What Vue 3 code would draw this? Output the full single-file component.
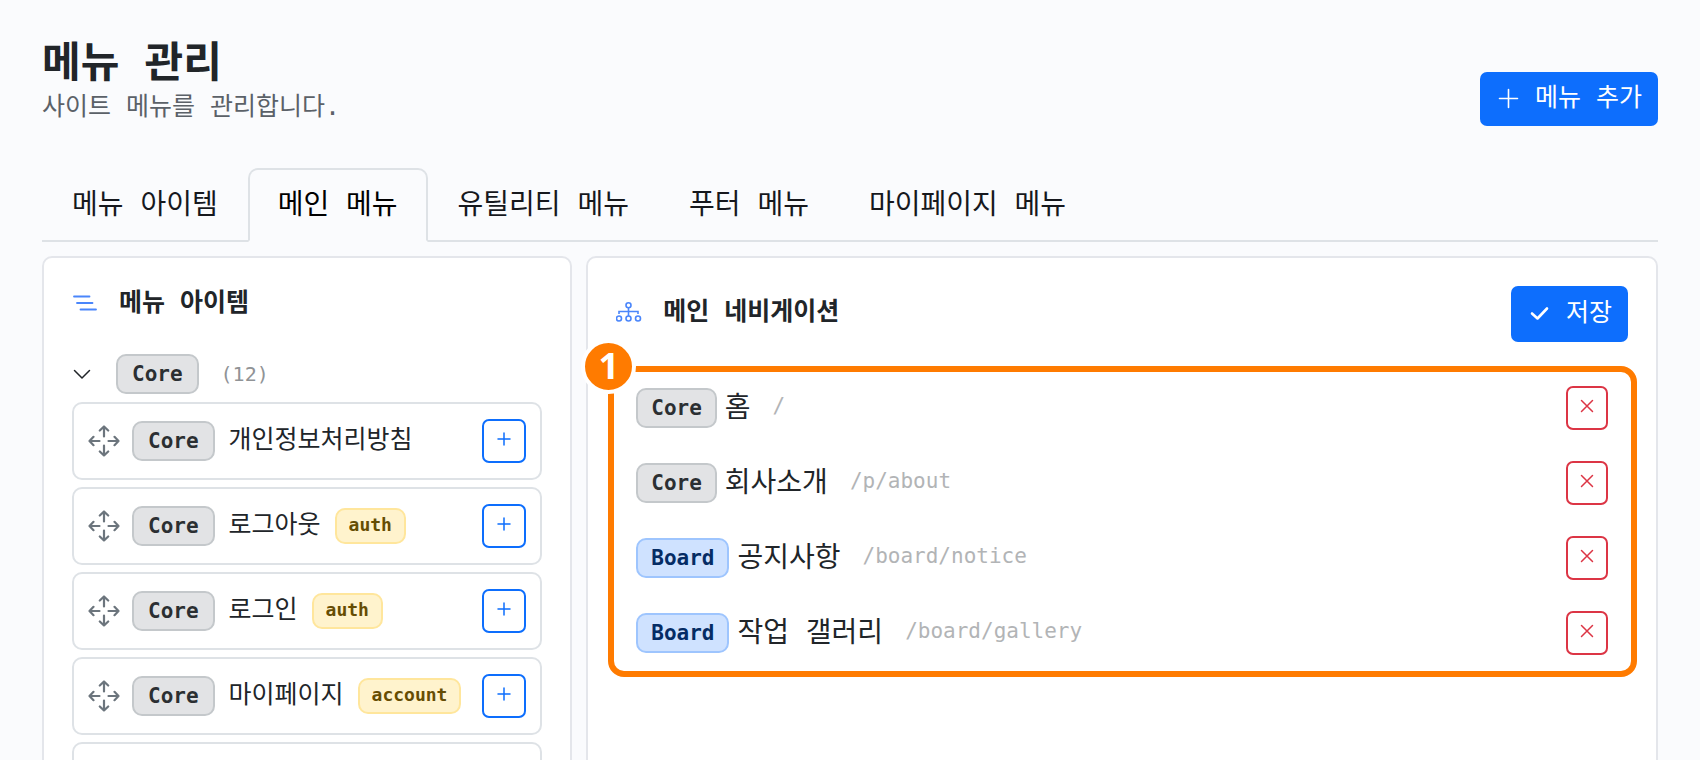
<script setup>
import { ref } from 'vue'

const tabs = ['메뉴 아이템', '메인 메뉴', '유틸리티 메뉴', '푸터 메뉴', '마이페이지 메뉴']
const activeTab = ref(1)
const open = ref(true)

const items = [
  { name: '개인정보처리방침' },
  { name: '로그아웃', tag: 'auth' },
  { name: '로그인', tag: 'auth' },
  { name: '마이페이지', tag: 'account' },
]

const entries = ref([
  { kind: 'Core', name: '홈', path: '/' },
  { kind: 'Core', name: '회사소개', path: '/p/about' },
  { kind: 'Board', name: '공지사항', path: '/board/notice' },
  { kind: 'Board', name: '작업 갤러리', path: '/board/gallery' },
])

function removeEntry(index) {
  entries.value.splice(index, 1)
}
</script>

<template>
  <main class="page">
    <header class="page-head">
      <div>
        <h1 class="title">메뉴 관리</h1>
        <p class="subtitle">사이트 메뉴를 관리합니다.</p>
      </div>
      <button type="button" class="btn btn-add">
        <svg class="btn-icon" viewBox="0 0 25 25" fill="none" stroke="currentColor" stroke-width="1.6" stroke-linecap="round" aria-hidden="true">
          <path d="M12.5 3.5v18M3.5 12.5h18" />
        </svg>
        <span>메뉴 추가</span>
      </button>
    </header>

    <div class="tabs" role="tablist">
      <button
        v-for="(tab, i) in tabs"
        :key="tab"
        type="button"
        role="tab"
        class="tab"
        :class="{ active: i === activeTab }"
        :aria-selected="i === activeTab"
        @click="activeTab = i"
      >{{ tab }}</button>
    </div>

    <div class="columns">
      <section class="card">
        <h2 class="card-title">
          <svg class="title-icon" viewBox="0 0 26 26" fill="none" stroke="currentColor" stroke-width="1.8" stroke-linecap="round" aria-hidden="true">
            <path d="M2 6.5h15.5M5 13h15.5M8.5 19.5H24" />
          </svg>
          <span>메뉴 아이템</span>
        </h2>

        <button type="button" class="group" :aria-expanded="open" @click="open = !open">
          <svg class="chevron" viewBox="0 0 20 20" fill="none" stroke="currentColor" stroke-width="1.5" stroke-linecap="round" stroke-linejoin="round" aria-hidden="true">
            <path d="M2.5 6.5 10 14l7.5-7.5" />
          </svg>
          <span class="badge badge-wide core">Core</span>
          <span class="count">(12)</span>
        </button>

        <ul v-if="open" class="items">
          <li v-for="item in items" :key="item.name" class="item">
            <svg class="drag" viewBox="0 0 32 32" fill="none" stroke="currentColor" stroke-width="2.2" stroke-linecap="round" stroke-linejoin="round" aria-hidden="true">
              <path d="M16 11.5V1.5M11.8 5.5 16 1.5l4.200 4M16 20.500v10M11.800 26.500l4.200 4 4.200-4M11.500 16h-10M5.500 11.800l-4 4.200 4 4.200M20.500 16h10M26.500 11.800l4 4.200-4 4.200" />
            </svg>
            <span class="badge badge-wide core">Core</span>
            <span class="item-name">{{ item.name }}</span>
            <span v-if="item.tag" class="tag">{{ item.tag }}</span>
            <button type="button" class="icon-btn add" :aria-label="item.name + ' 추가'">
              <svg class="glyph" viewBox="0 0 14 14" fill="none" stroke="currentColor" stroke-width="1.5" stroke-linecap="round" aria-hidden="true">
                <path d="M7 1v12M1 7h12" />
              </svg>
            </button>
          </li>
          <li class="item" aria-hidden="true"></li>
        </ul>
      </section>

      <section class="card">
        <div class="card-head">
          <h2 class="card-title">
            <svg class="title-icon" viewBox="0 0 26 26" fill="none" stroke="currentColor" stroke-width="1.6" aria-hidden="true">
              <circle cx="12.5" cy="6.2" r="2.5" />
              <circle cx="3" cy="19.5" r="2.5" />
              <circle cx="12.5" cy="19.5" r="2.5" />
              <circle cx="22" cy="19.5" r="2.5" />
              <path d="M12.5 8.7v8.300M3 15v-2.500h19V15" />
            </svg>
            <span>메인 네비게이션</span>
          </h2>
          <button type="button" class="btn btn-save">
            <svg class="btn-icon" viewBox="0 0 25 25" fill="none" stroke="currentColor" stroke-width="2.6" stroke-linecap="round" stroke-linejoin="round" aria-hidden="true">
              <path d="M5 12.500 10.500 17.500 20 7.500" />
            </svg>
            <span>저장</span>
          </button>
        </div>

        <div class="marked">
          <ul class="entries">
            <li v-for="(entry, i) in entries" :key="entry.path" class="entry">
              <span class="badge" :class="entry.kind.toLowerCase()">{{ entry.kind }}</span>
              <span class="entry-name">{{ entry.name }}</span>
              <span class="entry-path">{{ entry.path }}</span>
              <button type="button" class="icon-btn remove" :aria-label="entry.name + ' 삭제'" @click="removeEntry(i)">
                <svg class="glyph" viewBox="0 0 14 14" fill="none" stroke="currentColor" stroke-width="1.5" stroke-linecap="round" aria-hidden="true">
                  <path d="M1.5 1.5l11 11M12.5 1.5l-11 11" />
                </svg>
              </button>
            </li>
          </ul>
          <div class="frame"></div>
          <span class="marker">1</span>
        </div>
      </section>
    </div>
  </main>
</template>

<style>
html,
body {
  margin: 0;
  background: #fafbfd;
}
</style>

<style scoped>
.page {
  height: 100vh;
  padding: 38px 42px 0;
  overflow: hidden;
  color: #212529;
  font-family: "DejaVu Sans Mono", "Noto Sans CJK KR", monospace;
  font-size: 28px;
}

.page *,
.page {
  box-sizing: border-box;
}

button {
  margin: 0;
  font-family: inherit;
  cursor: pointer;
}

ul {
  margin: 0;
  padding: 0;
  list-style: none;
}

.page-head {
  display: flex;
  align-items: flex-end;
  justify-content: space-between;
}

.title,
.subtitle {
  margin: 0;
  white-space: nowrap;
}

.title {
  font-size: 42px;
  font-weight: 700;
  line-height: 50px;
}

.subtitle {
  color: #5b6168;
  font-size: 25px;
  line-height: 38px;
}

.btn {
  display: flex;
  flex: none;
  align-items: center;
  gap: 14px;
  padding: 0 16px 2px;
  border: 0;
  border-radius: 7px;
  background: #0d6efd;
  color: #fff;
  font-size: 25px;
  line-height: 48px;
  white-space: nowrap;
}

.btn-add {
  height: 54px;
}

.btn-save {
  height: 56px;
}

.btn-icon {
  width: 25px;
  height: 25px;
}

.tabs {
  display: flex;
  margin-top: 42px;
  border-bottom: 2px solid #dee2e6;
}

.tab {
  height: 74px;
  margin-bottom: -2px;
  padding: 0 28px;
  border: 2px solid transparent;
  border-radius: 10px 10px 0 0;
  background: none;
  color: #16181d;
  font-size: 28px;
  line-height: 68px;
  white-space: nowrap;
}

.tab.active {
  border-color: #dee2e6 #dee2e6 #fafbfd;
  background: #fafbfd;
  color: #000;
}

.columns {
  display: grid;
  grid-template-columns: 331fr 669fr;
  gap: 14px;
  margin-top: 14px;
}

.card {
  padding: 28px;
  border: 2px solid #e4e6eb;
  border-radius: 10px;
  background: #fff;
}

.card-title {
  display: flex;
  align-items: center;
  gap: 21px;
  margin: 0;
  font-size: 25px;
  font-weight: 600;
  line-height: 34px;
  white-space: nowrap;
}

.title-icon {
  width: 26px;
  height: 26px;
  color: #4a86fb;
}

.group {
  display: flex;
  align-items: center;
  width: 100%;
  margin: 34px 0 8px;
  padding: 0;
  border: 0;
  background: none;
  color: #212529;
}

.chevron {
  width: 20px;
  height: 20px;
  margin-right: 24px;
}

.count {
  margin-left: 22px;
  color: #909396;
  font-size: 20px;
}

.badge {
  flex: none;
  height: 40px;
  padding: 0 13px;
  border: 2px solid;
  border-radius: 10px;
  font-size: 21px;
  font-weight: 700;
  line-height: 37px;
}

.badge-wide {
  padding: 0 14px;
}

.core {
  border-color: #c4c8cb;
  background: #e2e3e5;
  color: #2b2f32;
}

.board {
  border-color: #9ec5fe;
  background: #cfe2ff;
  color: #052c65;
}

.items {
  display: grid;
  gap: 7px;
}

.item {
  display: flex;
  align-items: center;
  height: 78px;
  padding: 0 14px;
  border: 2px solid #dee2e6;
  border-radius: 10px;
}

.drag {
  flex: none;
  width: 32px;
  height: 32px;
  margin-right: 12px;
  color: #6c757d;
}

.item-name {
  margin: 0 14px;
  padding-bottom: 3px;
  font-size: 25px;
  line-height: 40px;
  white-space: nowrap;
}

.tag {
  height: 36px;
  padding: 0 12px;
  border: 2px solid #ffe69c;
  border-radius: 10px;
  background: #fff3cd;
  color: #664d03;
  font-size: 18px;
  font-weight: 700;
  line-height: 30px;
}

.icon-btn {
  display: flex;
  flex: none;
  align-items: center;
  justify-content: center;
  height: 44px;
  margin-left: auto;
  padding: 0 0 4px;
  border: 2px solid;
  border-radius: 7px;
  background: #fff;
}

.add {
  width: 44px;
  color: #0d6efd;
}

.remove {
  width: 42px;
  color: #dc3545;
}

.glyph {
  width: 14px;
  height: 14px;
}

.card-head {
  display: flex;
  align-items: center;
  justify-content: space-between;
}

.card-head .card-title {
  padding-bottom: 4px;
}

.marked {
  position: relative;
  margin-top: 28px;
  padding: 0 20px;
}

.entry {
  display: flex;
  align-items: center;
  height: 75px;
}

.entry-name {
  margin-left: 8px;
  line-height: 44px;
  white-space: nowrap;
}

.entry-path {
  margin-left: 22px;
  padding-bottom: 3px;
  color: #b2b4b6;
  font-size: 21px;
  line-height: 44px;
}

/* Callout around the list with its numbered marker. */
.frame {
  position: absolute;
  inset: -4px -9px -7px -8px;
  border: 6px solid #ff7b00;
  border-radius: 16px;
  pointer-events: none;
}

.marker {
  position: absolute;
  top: -31px;
  left: -35px;
  width: 55px;
  height: 55px;
  border: 4px solid #fff;
  border-radius: 50%;
  background: #ff7b00;
  color: #fff;
  font-family: "Open Sans", "Noto Sans", sans-serif;
  font-size: 36px;
  font-weight: 700;
  line-height: 46px;
  text-align: center;
}
</style>
